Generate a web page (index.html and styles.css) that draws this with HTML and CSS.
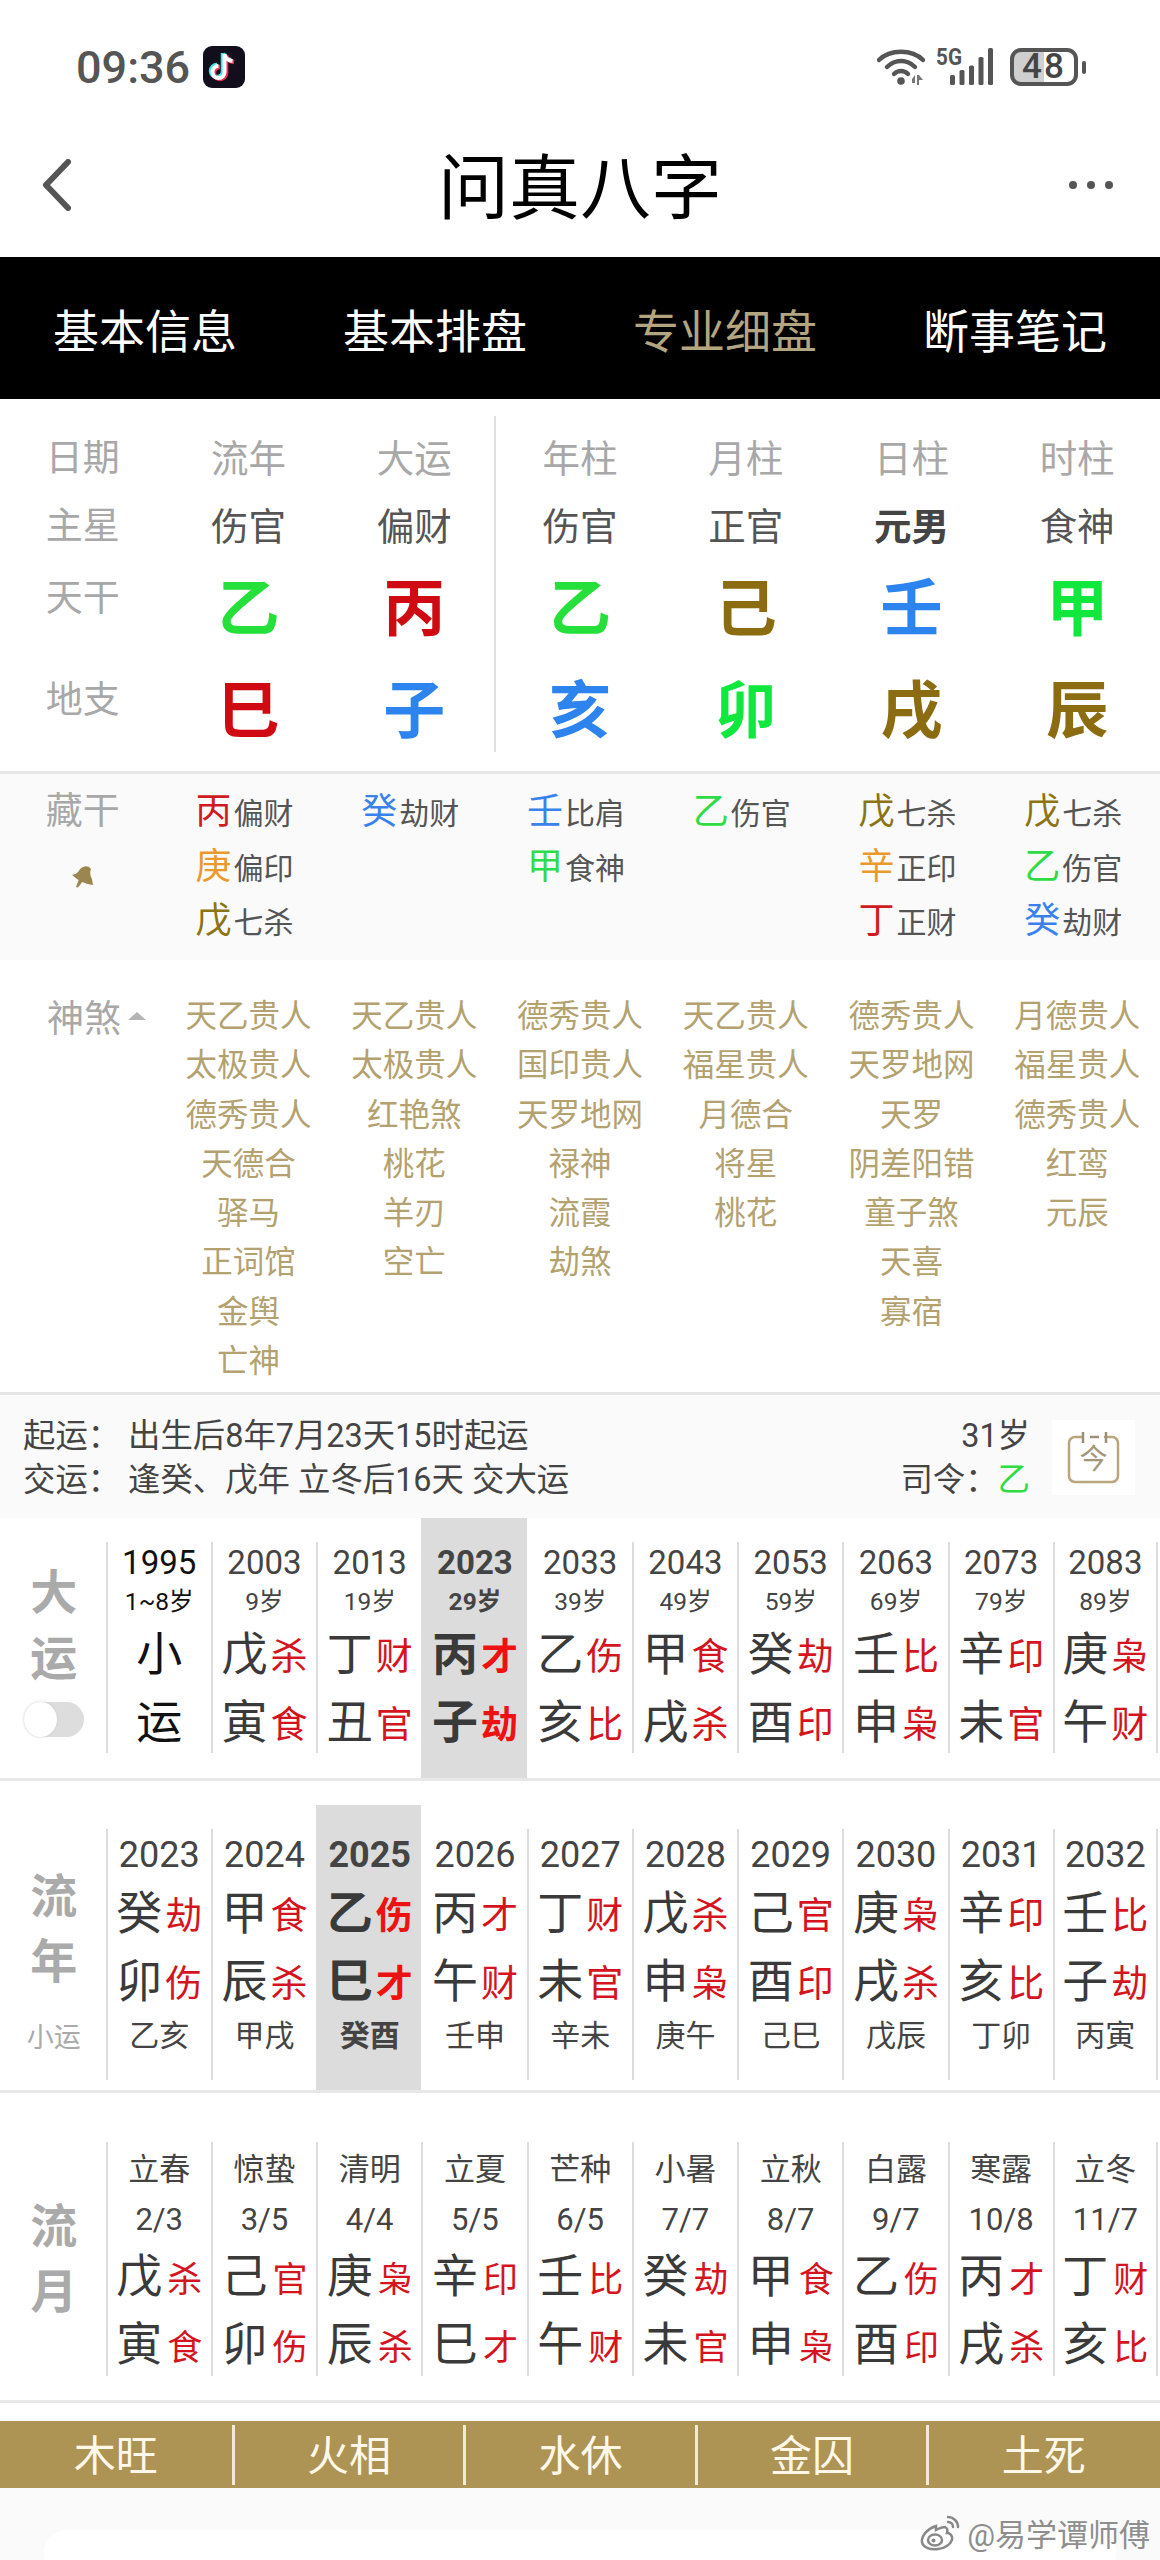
FILE: index.html
```html
<!DOCTYPE html>
<html lang="zh-CN">
<head>
    <meta charset="UTF-8">
    <meta name="viewport" content="width=device-width, initial-scale=1.0">
    <title>问真八字</title>
    <link rel="stylesheet" href="styles.css">
</head>
<body>
    <div class="status">
        <div class="status-left">
            <span class="time">09:36</span>
            <svg class="tiktok" viewBox="0 0 42 42">
                <rect width="42" height="42" rx="9" fill="#130e1b"/>
                <path d="M21.5 8v18a6 6 0 1 1-6-6M21.5 8c.6 4 3.600 6.500 8 7" fill="none" stroke="#35e6e6" stroke-width="4.500" transform="translate(-1.500 -1)"/>
                <path d="M21.500 8v18a6 6 0 1 1-6-6M21.500 8c.6 4 3.600 6.500 8 7" fill="none" stroke="#f0305a" stroke-width="4.500" transform="translate(1.500 1)"/>
                <path d="M21.500 8v18a6 6 0 1 1-6-6M21.500 8c.6 4 3.600 6.500 8 7" fill="none" stroke="#fff" stroke-width="4"/>
            </svg>
        </div>
        <div class="status-right">
            <svg class="wifi" viewBox="0 0 48 40">
                <path d="M2 13C13 2 35 2 46 13" fill="none" stroke="#555" stroke-width="4.500" stroke-linecap="round"/>
                <path d="M10 20C18 12 30 12 38 20" fill="none" stroke="#555" stroke-width="4.500" stroke-linecap="round"/>
                <path d="M17 27C21 23 27 23 31 27" fill="none" stroke="#555" stroke-width="4.500" stroke-linecap="round"/>
                <circle cx="24" cy="34" r="3.800" fill="#555"/>
                <path d="M35 36h3v-8l-3 4zM40 28h2l4 5h-4v5h-2z" fill="#777"/>
            </svg>
            <svg class="signal" viewBox="0 -8 60 46">
                <text x="0" y="17" class="signal-text" textLength="26" lengthAdjust="spacingAndGlyphs">5G</text>
                <rect x="14" y="27" width="5" height="10" rx="1.500" fill="#555"/>
                <rect x="23.500" y="22" width="5" height="15" rx="1.500" fill="#555"/>
                <rect x="33" y="17.500" width="5" height="19.500" rx="1.500" fill="#555"/>
                <rect x="42.500" y="9" width="5" height="28" rx="1.500" fill="#555"/>
                <rect x="52" y="0" width="5" height="37" rx="1.500" fill="#555"/>
            </svg>
            <div class="battery">48</div>
            <div class="battery-tip"></div>
        </div>
    </div>

    <div class="nav">
        <svg class="back" viewBox="0 0 31 52"><path d="M27 3L5 26l22 23" fill="none" stroke="#555" stroke-width="6" stroke-linecap="round" stroke-linejoin="round"/></svg>
        <div class="title">问真八字</div>
        <div class="more"><span></span><span></span><span></span></div>
    </div>

    <div class="tabs">
        <div>基本信息</div>
        <div>基本排盘</div>
        <div class="on">专业细盘</div>
        <div>断事笔记</div>
    </div>

    <div class="pillars">
        <div class="row-name">日期</div><div class="head">流年</div><div class="head">大运</div><div class="head">年柱</div><div class="head">月柱</div><div class="head">日柱</div><div class="head">时柱</div>
        <div class="row-name">主星</div><div class="star">伤官</div><div class="star">偏财</div><div class="star">伤官</div><div class="star">正官</div><div class="star me">元男</div><div class="star">食神</div>
        <div class="row-name up">天干</div><div class="big wood">乙</div><div class="big fire">丙</div><div class="big wood">乙</div><div class="big earth">己</div><div class="big water">壬</div><div class="big wood2">甲</div>
        <div class="row-name up">地支</div><div class="big fire">巳</div><div class="big water">子</div><div class="big water">亥</div><div class="big wood2">卯</div><div class="big earth">戌</div><div class="big earth">辰</div>
    </div>

    <div class="hidden-stems">
        <div class="hs-label">
            <div class="row-name">藏干</div>
            <svg class="pin" viewBox="0 0 22 22"><path d="M0 9Q6 8 8 3Q12-1 17 1L19 3Q17 8 20 13L21 19Q10 18 0 9Z" fill="#9c8650"/><path d="M7 13L4 21L6 21.500L11 15Z" fill="#9c8650"/></svg>
        </div>
        <div class="hs-col">
            <div><span class="c-fire">丙</span>偏财</div>
            <div><span class="c-metal">庚</span>偏印</div>
            <div><span class="c-earth">戊</span>七杀</div>
        </div>
        <div class="hs-col">
            <div><span class="c-water">癸</span>劫财</div>
        </div>
        <div class="hs-col">
            <div><span class="c-water">壬</span>比肩</div>
            <div><span class="c-wood">甲</span>食神</div>
        </div>
        <div class="hs-col">
            <div><span class="c-wood">乙</span>伤官</div>
        </div>
        <div class="hs-col">
            <div><span class="c-earth">戊</span>七杀</div>
            <div><span class="c-metal">辛</span>正印</div>
            <div><span class="c-fire">丁</span>正财</div>
        </div>
        <div class="hs-col">
            <div><span class="c-earth">戊</span>七杀</div>
            <div><span class="c-wood">乙</span>伤官</div>
            <div><span class="c-water">癸</span>劫财</div>
        </div>
    </div>

    <div class="shensha">
        <div class="ss-label"><span class="row-name">神煞</span><span class="tri"></span></div>
        <div class="ss-col"><div>天乙贵人</div><div>太极贵人</div><div>德秀贵人</div><div>天德合</div><div>驿马</div><div>正词馆</div><div>金舆</div><div>亡神</div></div>
        <div class="ss-col"><div>天乙贵人</div><div>太极贵人</div><div>红艳煞</div><div>桃花</div><div>羊刃</div><div>空亡</div></div>
        <div class="ss-col"><div>德秀贵人</div><div>国印贵人</div><div>天罗地网</div><div>禄神</div><div>流霞</div><div>劫煞</div></div>
        <div class="ss-col"><div>天乙贵人</div><div>福星贵人</div><div>月德合</div><div>将星</div><div>桃花</div></div>
        <div class="ss-col"><div>德秀贵人</div><div>天罗地网</div><div>天罗</div><div>阴差阳错</div><div>童子煞</div><div>天喜</div><div>寡宿</div></div>
        <div class="ss-col"><div>月德贵人</div><div>福星贵人</div><div>德秀贵人</div><div>红鸾</div><div>元辰</div></div>
    </div>

    <div class="info">
        <div class="info-left">
            <div class="info-line"><span class="info-key">起运：</span>出生后8年7月23天15时起运</div>
            <div class="info-line"><span class="info-key">交运：</span>逢癸、戊年 立冬后16天 交大运</div>
        </div>
        <div class="info-right">
            <div>31岁</div>
            <div>司令：<span class="c-wood">乙</span></div>
        </div>
        <div class="today">
            <svg viewBox="0 0 53 54">
                <path d="M16 6H8a6 6 0 0 0-6 6v33a6 6 0 0 0 6 6h37a6 6 0 0 0 6-6V12a6 6 0 0 0-6-6h-8" fill="none" stroke="#b9a67c" stroke-width="2.500"/>
                <path d="M16 1v11M39 1v11" stroke="#9c9078" stroke-width="2.500"/>
                <path d="M23 6h9" stroke="#9c9078" stroke-width="2.500"/>
                <text x="26.500" y="38" class="today-text">今</text>
            </svg>
        </div>
    </div>

    <div class="luck dayun">
        <div class="side">
            <div class="side-char">大</div>
            <div class="side-char">运</div>
            <div class="toggle"><span></span></div>
        </div>
        <div class="cols">
            <div class="col"><div class="in first"><div class="year">1995</div><div class="age">1~8岁</div><div class="pair"><span class="g">小</span></div><div class="pair"><span class="g">运</span></div></div></div>
            <div class="col"><div class="in"><div class="year">2003</div><div class="age">9岁</div><div class="pair"><span class="g">戊</span><span class="s">杀</span></div><div class="pair"><span class="g">寅</span><span class="s">食</span></div></div></div>
            <div class="col"><div class="in"><div class="year">2013</div><div class="age">19岁</div><div class="pair"><span class="g">丁</span><span class="s">财</span></div><div class="pair"><span class="g">丑</span><span class="s">官</span></div></div></div>
            <div class="col now"><div class="in"><div class="year">2023</div><div class="age">29岁</div><div class="pair"><span class="g">丙</span><span class="s">才</span></div><div class="pair"><span class="g">子</span><span class="s">劫</span></div></div></div>
            <div class="col"><div class="in"><div class="year">2033</div><div class="age">39岁</div><div class="pair"><span class="g">乙</span><span class="s">伤</span></div><div class="pair"><span class="g">亥</span><span class="s">比</span></div></div></div>
            <div class="col"><div class="in"><div class="year">2043</div><div class="age">49岁</div><div class="pair"><span class="g">甲</span><span class="s">食</span></div><div class="pair"><span class="g">戌</span><span class="s">杀</span></div></div></div>
            <div class="col"><div class="in"><div class="year">2053</div><div class="age">59岁</div><div class="pair"><span class="g">癸</span><span class="s">劫</span></div><div class="pair"><span class="g">酉</span><span class="s">印</span></div></div></div>
            <div class="col"><div class="in"><div class="year">2063</div><div class="age">69岁</div><div class="pair"><span class="g">壬</span><span class="s">比</span></div><div class="pair"><span class="g">申</span><span class="s">枭</span></div></div></div>
            <div class="col"><div class="in"><div class="year">2073</div><div class="age">79岁</div><div class="pair"><span class="g">辛</span><span class="s">印</span></div><div class="pair"><span class="g">未</span><span class="s">官</span></div></div></div>
            <div class="col"><div class="in"><div class="year">2083</div><div class="age">89岁</div><div class="pair"><span class="g">庚</span><span class="s">枭</span></div><div class="pair"><span class="g">午</span><span class="s">财</span></div></div></div>
        </div>
    </div>

    <div class="luck liunian">
        <div class="side">
            <div class="side-char">流</div>
            <div class="side-char">年</div>
            <div class="side-small">小运</div>
        </div>
        <div class="cols">
            <div class="col"><div class="in"><div class="year">2023</div><div class="pair"><span class="g">癸</span><span class="s">劫</span></div><div class="pair"><span class="g">卯</span><span class="s">伤</span></div><div class="sub">乙亥</div></div></div>
            <div class="col"><div class="in"><div class="year">2024</div><div class="pair"><span class="g">甲</span><span class="s">食</span></div><div class="pair"><span class="g">辰</span><span class="s">杀</span></div><div class="sub">甲戌</div></div></div>
            <div class="col now"><div class="in"><div class="year">2025</div><div class="pair"><span class="g">乙</span><span class="s">伤</span></div><div class="pair"><span class="g">巳</span><span class="s">才</span></div><div class="sub">癸酉</div></div></div>
            <div class="col"><div class="in"><div class="year">2026</div><div class="pair"><span class="g">丙</span><span class="s">才</span></div><div class="pair"><span class="g">午</span><span class="s">财</span></div><div class="sub">壬申</div></div></div>
            <div class="col"><div class="in"><div class="year">2027</div><div class="pair"><span class="g">丁</span><span class="s">财</span></div><div class="pair"><span class="g">未</span><span class="s">官</span></div><div class="sub">辛未</div></div></div>
            <div class="col"><div class="in"><div class="year">2028</div><div class="pair"><span class="g">戊</span><span class="s">杀</span></div><div class="pair"><span class="g">申</span><span class="s">枭</span></div><div class="sub">庚午</div></div></div>
            <div class="col"><div class="in"><div class="year">2029</div><div class="pair"><span class="g">己</span><span class="s">官</span></div><div class="pair"><span class="g">酉</span><span class="s">印</span></div><div class="sub">己巳</div></div></div>
            <div class="col"><div class="in"><div class="year">2030</div><div class="pair"><span class="g">庚</span><span class="s">枭</span></div><div class="pair"><span class="g">戌</span><span class="s">杀</span></div><div class="sub">戊辰</div></div></div>
            <div class="col"><div class="in"><div class="year">2031</div><div class="pair"><span class="g">辛</span><span class="s">印</span></div><div class="pair"><span class="g">亥</span><span class="s">比</span></div><div class="sub">丁卯</div></div></div>
            <div class="col"><div class="in"><div class="year">2032</div><div class="pair"><span class="g">壬</span><span class="s">比</span></div><div class="pair"><span class="g">子</span><span class="s">劫</span></div><div class="sub">丙寅</div></div></div>
        </div>
    </div>

    <div class="luck liuyue">
        <div class="side">
            <div class="side-char">流</div>
            <div class="side-char">月</div>
        </div>
        <div class="cols">
            <div class="col"><div class="in"><div class="term">立春</div><div class="date">2/3</div><div class="pair"><span class="g">戊</span><span class="s">杀</span></div><div class="pair"><span class="g">寅</span><span class="s">食</span></div></div></div>
            <div class="col"><div class="in"><div class="term">惊蛰</div><div class="date">3/5</div><div class="pair"><span class="g">己</span><span class="s">官</span></div><div class="pair"><span class="g">卯</span><span class="s">伤</span></div></div></div>
            <div class="col"><div class="in"><div class="term">清明</div><div class="date">4/4</div><div class="pair"><span class="g">庚</span><span class="s">枭</span></div><div class="pair"><span class="g">辰</span><span class="s">杀</span></div></div></div>
            <div class="col"><div class="in"><div class="term">立夏</div><div class="date">5/5</div><div class="pair"><span class="g">辛</span><span class="s">印</span></div><div class="pair"><span class="g">巳</span><span class="s">才</span></div></div></div>
            <div class="col"><div class="in"><div class="term">芒种</div><div class="date">6/5</div><div class="pair"><span class="g">壬</span><span class="s">比</span></div><div class="pair"><span class="g">午</span><span class="s">财</span></div></div></div>
            <div class="col"><div class="in"><div class="term">小暑</div><div class="date">7/7</div><div class="pair"><span class="g">癸</span><span class="s">劫</span></div><div class="pair"><span class="g">未</span><span class="s">官</span></div></div></div>
            <div class="col"><div class="in"><div class="term">立秋</div><div class="date">8/7</div><div class="pair"><span class="g">甲</span><span class="s">食</span></div><div class="pair"><span class="g">申</span><span class="s">枭</span></div></div></div>
            <div class="col"><div class="in"><div class="term">白露</div><div class="date">9/7</div><div class="pair"><span class="g">乙</span><span class="s">伤</span></div><div class="pair"><span class="g">酉</span><span class="s">印</span></div></div></div>
            <div class="col"><div class="in"><div class="term">寒露</div><div class="date">10/8</div><div class="pair"><span class="g">丙</span><span class="s">才</span></div><div class="pair"><span class="g">戌</span><span class="s">杀</span></div></div></div>
            <div class="col"><div class="in"><div class="term">立冬</div><div class="date">11/7</div><div class="pair"><span class="g">丁</span><span class="s">财</span></div><div class="pair"><span class="g">亥</span><span class="s">比</span></div></div></div>
        </div>
    </div>

    <div class="season">
        <div>木旺</div>
        <div>火相</div>
        <div>水休</div>
        <div>金囚</div>
        <div>土死</div>
    </div>

    <div class="bottom">
        <div class="card"></div>
    </div>

    <div class="watermark">
        <svg viewBox="0 0 42 38">
            <path d="M17 12C8 15 2 22 3 28c1 6 9 8 16 7 8-1 15-6 14-12-1-3-3-4-5-4 1-3 0-5-2-6-2 0-5 1-9 3z" fill="#fff" stroke="#888" stroke-width="2.500"/>
            <ellipse cx="16" cy="26" rx="7" ry="5.500" fill="none" stroke="#888" stroke-width="2.500"/>
            <circle cx="14.500" cy="26.500" r="2" fill="#888"/>
            <path d="M29 3c5 0 10 4 10 10M29 8c3 0 5 2 5 5" fill="none" stroke="#888" stroke-width="2.500" stroke-linecap="round"/>
        </svg>
        <span>@易学谭师傅</span>
    </div>
</body>
</html>
```

FILE: styles.css
```css
* {
    padding: 0;
    margin: 0;
    box-sizing: border-box;
}

html, body {
    width: 1160px;
    height: 2560px;
    overflow: hidden;
}

body {
    position: relative;
    background-color: white;
    color: #444;
    font-family: Roboto, "Noto Sans CJK SC", sans-serif;
}

/* status bar */
.status {
    height: 134px;
    padding: 0 74px 0 76px;
    display: flex;
    align-items: center;
    justify-content: space-between;
}
.status-left {
    display: flex;
    align-items: center;
    gap: 13px;
}
.time {
    font-size: 45px;
    font-weight: 500;
    color: #555;
}
.tiktok {
    width: 42px;
    height: 42px;
}
.status-right {
    display: flex;
    align-items: center;
}
.wifi {
    width: 48px;
    height: 40px;
    margin-right: 11px;
}
.signal {
    width: 60px;
    height: 46px;
    margin-top: -8px;
    margin-right: 14px;
}
.signal-text {
    font-family: Roboto, sans-serif;
    font-weight: 700;
    font-size: 24px;
    fill: #555;
}
.battery {
    width: 68px;
    height: 38px;
    border: 4px solid #555;
    border-radius: 11px;
    background: linear-gradient(90deg, #cfcfcf 50%, white 50%);
    font-size: 35px;
    font-weight: 500;
    line-height: 30px;
    text-align: center;
    letter-spacing: 2px;
    color: #444;
}
.battery-tip {
    width: 4px;
    height: 13px;
    margin-left: 4px;
    border-radius: 2px;
    background-color: #555;
}

/* title bar */
.nav {
    height: 123px;
    padding: 0 41px 21px;
    display: grid;
    grid-template-columns: 1fr auto 1fr;
    align-items: center;
}
.back {
    width: 31px;
    height: 52px;
}
.title {
    padding-top: 8px;
    font-size: 71px;
    line-height: 80px;
    color: black;
}
.more {
    justify-self: end;
    margin-right: 6px;
    display: flex;
    gap: 10px;
}
.more span {
    width: 8px;
    height: 8px;
    border-radius: 50%;
    background-color: #555;
}

/* black tabs */
.tabs {
    height: 142px;
    background-color: black;
    display: grid;
    grid-template-columns: repeat(4, 1fr);
    align-items: center;
    text-align: center;
    font-size: 46px;
    color: white;
}
.tabs .on {
    color: #b3a57f;
}

/* pillars */
.pillars {
    position: relative;
    height: 372px;
    padding-top: 22px;
    display: grid;
    grid-template-columns: repeat(7, 1fr);
    grid-template-rows: 68px 68px 105px 100px;
    align-items: center;
    text-align: center;
}
.pillars::after {
    content: "";
    position: absolute;
    left: 494px;
    top: 17px;
    bottom: 19px;
    width: 2px;
    background-color: #e0e0e0;
}
.row-name {
    font-size: 37px;
    color: #a8a8a8;
    text-align: center;
}
.row-name.up {
    padding-bottom: 30px;
}
.head {
    font-size: 37.500px;
    color: #a8a8a8;
}
.star {
    font-size: 37.500px;
    color: #555;
}
.star.me {
    font-weight: 700;
    color: #444;
}
.big {
    font-size: 62px;
    font-weight: 700;
    line-height: 80px;
}
.wood { color: #25df3b; }
.wood2 { color: #10e83e; }
.fire { color: #d00a12; }
.earth { color: #8c6c10; }
.water { color: #2e84ee; }
.c-wood { color: #2fdc45; }
.c-fire { color: #d01a22; }
.c-earth { color: #8c7414; }
.c-water { color: #3a82ea; }
.c-metal { color: #ea9a2c; }

/* hidden stems */
.hidden-stems {
    height: 189px;
    padding-top: 12px;
    border-top: 3px solid #e8e8e8;
    background-color: #fafafa;
    display: grid;
    grid-template-columns: repeat(7, 1fr);
    color: #555;
}
.hs-label {
    display: flex;
    flex-direction: column;
    align-items: center;
}
.hs-label .row-name {
    line-height: 52px;
}
.pin {
    width: 22px;
    height: 22px;
    margin-top: 28px;
}
.hs-col {
    padding-right: 8px;
    display: flex;
    flex-direction: column;
    align-items: center;
    font-size: 30px;
    line-height: 52.500px;
}
.hs-col span {
    margin-right: 2px;
    font-size: 36px;
}

/* shensha */
.shensha {
    height: 435px;
    padding-top: 32px;
    border-bottom: 3px solid #e6e6e6;
    display: grid;
    grid-template-columns: repeat(7, 1fr);
}
.ss-label {
    padding-left: 47px;
    display: flex;
    align-items: center;
    align-self: start;
    height: 47px;
}
.tri {
    width: 0;
    height: 0;
    margin-left: 7px;
    border-left: 9px solid transparent;
    border-right: 9px solid transparent;
    border-bottom: 8px solid #b4b4b4;
}
.ss-col {
    font-size: 31.500px;
    line-height: 49.250px;
    text-align: center;
    color: #b3a26f;
}

/* qiyun info */
.info {
    height: 123px;
    padding: 19px 25px 0 23px;
    background-color: #fafafa;
    display: flex;
    font-size: 32.400px;
    line-height: 44px;
    color: #444;
}
.info-left {
    flex: 1;
}
.info-key {
    display: inline-block;
    width: 105px;
}
.info-right {
    margin-right: 22px;
    text-align: right;
}
.today {
    width: 83px;
    height: 75px;
    margin-top: 6px;
    background-color: white;
    display: flex;
    align-items: center;
    justify-content: center;
}
.today svg {
    width: 53px;
    height: 54px;
}
.today-text {
    font-size: 28px;
    text-anchor: middle;
    fill: #a3967a;
}

/* dayun / liunian / liuyue */
.luck {
    display: flex;
    background-color: white;
}
.side {
    width: 105.600px;
    padding-left: 2px;
    flex-shrink: 0;
    display: flex;
    flex-direction: column;
    align-items: center;
    color: #aaa;
}
.side-char {
    font-size: 47px;
    font-weight: 700;
}
.cols {
    flex: 1;
    padding-right: 2px;
    display: grid;
    grid-template-columns: repeat(10, 1fr);
}
.col {
    padding-top: 24px;
}
.in {
    border-left: 2px solid #dcdcdc;
    text-align: center;
    color: #444;
}
.col:last-child .in {
    border-right: 2px solid #dcdcdc;
}
.now {
    background-color: #dcdcdc;
}
.now .in,
.now + .col .in {
    border-left-color: transparent;
    font-weight: 700;
}
.now + .col .in {
    font-weight: 400;
}
.year {
    font-size: 33px;
    line-height: 42px;
}
.age {
    font-size: 24.500px;
    line-height: 36px;
}
.pair {
    display: flex;
    align-items: baseline;
    justify-content: center;
    gap: 3px;
    height: 68px;
    line-height: 68px;
}
.g {
    font-size: 46px;
    color: #3a3a3a;
}
.s {
    font-size: 37px;
    color: #d4141e;
}
.now .s {
    color: #ee1111;
}
.first .year,
.first .age,
.first .g {
    color: #111;
}

.dayun {
    height: 263px;
    border-bottom: 3px solid #e8e8e8;
}
.dayun .side {
    padding-top: 42px;
}
.dayun .side-char {
    line-height: 66px;
}
.dayun .in {
    height: 211px;
}
.toggle {
    width: 60px;
    height: 35px;
    margin-top: 10px;
    border-radius: 18px;
    background-color: #ddd;
}
.toggle span {
    display: block;
    width: 33px;
    height: 35px;
    border-radius: 50%;
    background-color: white;
    box-shadow: 0 0 3px #ccc;
}

.liunian {
    height: 288px;
    margin-top: 24px;
    border-bottom: 3px solid #e8e8e8;
}
.liunian .side {
    padding-top: 59px;
}
.liunian .side-char {
    line-height: 65px;
}
.side-small {
    margin-top: 24px;
    font-size: 27px;
    line-height: 40px;
}
.liunian .in {
    height: 251px;
}
.liunian .year {
    padding-top: 2px;
    font-size: 36px;
    line-height: 48px;
}
.sub {
    font-size: 30px;
    line-height: 42px;
}

.liuyue {
    height: 290px;
    margin-top: 20px;
    border-bottom: 3px solid #e8e8e8;
}
.liuyue .side {
    padding-top: 81px;
}
.liuyue .side-char {
    line-height: 65px;
}
.liuyue .col {
    padding-top: 29px;
}
.liuyue .in {
    height: 234px;
}
.term {
    font-size: 31px;
    line-height: 56px;
}
.date {
    font-size: 31px;
    line-height: 44px;
}
.liuyue .pair {
    gap: 5px;
}
.liuyue .s {
    font-size: 35px;
}

/* wuxing bar */
.season {
    height: 67px;
    margin-top: 18px;
    padding: 4px 2px 3px 0;
    background-color: #ad9354;
    display: grid;
    grid-template-columns: repeat(5, 1fr);
    text-align: center;
    font-size: 42px;
    line-height: 64px;
    color: #fff8e8;
}
.season div {
    height: 60px;
}
.season div + div {
    border-left: 3px solid #f2ead6;
}

.bottom {
    height: 72px;
    padding: 42px 44px 0;
    background-color: #fafafa;
}
.card {
    height: 100%;
    border-radius: 22px 22px 0 0;
    background-color: white;
}

.watermark {
    position: absolute;
    right: 10px;
    top: 2510px;
    display: flex;
    align-items: center;
    gap: 6px;
    font-size: 31px;
    color: #8e8e8e;
    text-shadow: 0 0 2px white;
}
.watermark svg {
    width: 42px;
    height: 38px;
}
```
